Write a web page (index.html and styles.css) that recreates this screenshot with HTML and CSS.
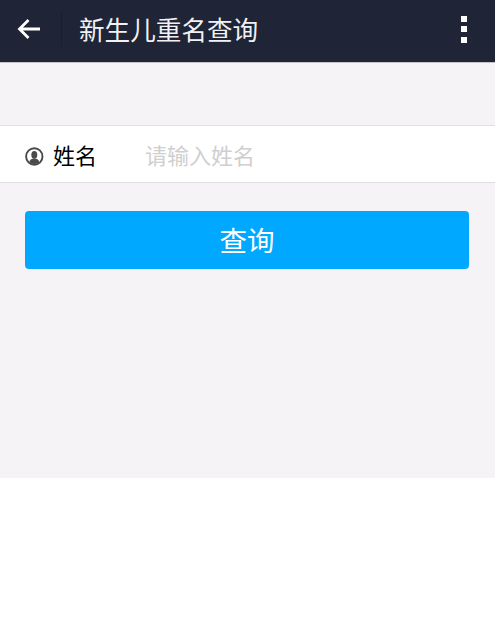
FILE: index.html
```html
<!DOCTYPE html>
<html lang="zh">
<head>
<meta charset="utf-8">
<title>新生儿重名查询</title>
<link rel="stylesheet" href="styles.css">
</head>
<body>
<div class="screen">
  <header class="topbar">
    <svg class="back" width="26" height="24" viewBox="0 0 26 24" aria-hidden="true"><path d="M24 12H3.500M12.500 3 3.500 12l9 9" fill="none" stroke="#fff" stroke-width="2.800"/></svg>
    <span class="divider"></span>
    <h1 class="title">新生儿重名查询</h1>
    <div class="menu"><i></i><i></i><i></i></div>
  </header>
  <div class="field">
    <svg class="user" width="19" height="19" viewBox="0 0 19 19" aria-hidden="true">
      <circle cx="9.300" cy="9.500" r="8.200" fill="#fff" stroke="#4a4a4a" stroke-width="1.900"/>
      <ellipse cx="9.300" cy="7.800" rx="3" ry="3.900" fill="#4a4a4a"/>
      <path d="M4.200 15.200c.8-2.700 2.600-3.600 5.100-3.600s4.300.9 5.100 3.600a8 8 0 0 1-10.200 0z" fill="#4a4a4a"/>
    </svg>
    <span class="label">姓名</span>
    <span class="placeholder">请输入姓名</span>
  </div>
  <button class="submit" type="button">查询</button>
</div>
</body>
</html>
```
FILE: styles.css
```css
* { box-sizing: border-box; }
html, body { margin: 0; padding: 0; background: #fff; }
body { font-family: "Noto Sans CJK SC", "Noto Sans", sans-serif; }
.screen { height: 478px; background: #f5f3f6; display: flex; flex-direction: column; }
.topbar { height: 63px; background: #1f2436; border-bottom: 1px solid #c4c3c8; display: flex; align-items: center; padding: 0 0 4px 16px; }
.back { flex: none; }
.divider { width: 1px; height: 33px; margin-left: 19px; background: #191d2c; flex: none; }
.title { margin: 0 0 0 17px; font-size: 25.6px; font-weight: 400; line-height: 32px; color: #f1f1f3; flex: 1; }
.menu { display: flex; flex-direction: column; gap: 4.500px; margin-right: 28px; }
.menu i { display: block; width: 6px; height: 6px; background: #fff; }
.field { margin-top: 62px; height: 58px; background: #fff; border-top: 1px solid #e0e0e1; border-bottom: 1px solid #e0e0e1; display: flex; align-items: center; padding-left: 25px; }
.user { flex: none; margin-top: 4px; }
.label { margin-left: 9px; width: 92px; font-size: 22px; line-height: 30px; color: #000; }
.placeholder { font-size: 22px; line-height: 30px; color: #cfcfcf; }
.submit { display: block; margin: 28px 26px 0 25px; height: 58px; border: 0; border-radius: 4px; background: #00a9ff; color: #fff; font: inherit; font-size: 27.5px; line-height: 40px; padding: 0 0 2px; }
```
